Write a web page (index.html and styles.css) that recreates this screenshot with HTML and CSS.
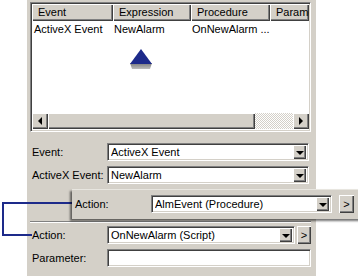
FILE: index.html
```html
<!DOCTYPE html>
<html lang="en">
<head>
    <meta charset="UTF-8">
    <title>Event Handler</title>
    <link rel="stylesheet" href="styles.css">
</head>
<body>
    <div class="panel">
        <div class="list">
            <div class="list-head">
                <div class="col col-event">Event</div>
                <div class="col col-expr">Expression</div>
                <div class="col col-proc">Procedure</div>
                <div class="col col-param">Parame</div>
            </div>
            <div class="list-body">
                <div class="row">
                    <div class="cell col-event first">ActiveX Event</div>
                    <div class="cell col-expr">NewAlarm</div>
                    <div class="cell col-proc">OnNewAlarm ...</div>
                </div>
            </div>
            <div class="hscroll">
                <div class="sbtn"><span class="arrow-left"></span></div>
                <div class="thumb"></div>
                <div class="trough"></div>
                <div class="sbtn"><span class="arrow-right"></span></div>
            </div>
            <!-- pointer marker under the Expression column -->
            <svg class="pointer" width="26" height="22" viewBox="0 0 26 22">
                <defs>
                    <linearGradient id="base" x1="0" y1="0" x2="0" y2="1">
                        <stop offset="0" stop-color="#7a7a7a"/>
                        <stop offset="1" stop-color="#bdbdbd"/>
                    </linearGradient>
                </defs>
                <path d="M2 14 L24 14 L22 20 L4 20 Z" fill="url(#base)"/>
                <path d="M13 0 L24 15 L2 15 Z" fill="#1d2a8a"/>
            </svg>
        </div>

        <div class="form">
            <div class="field">
                <label class="lbl">Event:</label>
                <div class="combo wide"><span class="combo-text">ActiveX Event</span><span class="drop"><span class="arrow-down"></span></span></div>
            </div>
            <div class="field">
                <label class="lbl">ActiveX Event:</label>
                <div class="combo wide"><span class="combo-text">NewAlarm</span><span class="drop"><span class="arrow-down"></span></span></div>
            </div>

            <div class="callout">
                <label class="lbl callout-lbl">Action:</label>
                <div class="combo callout-combo"><span class="combo-text">AlmEvent (Procedure)</span><span class="drop"><span class="arrow-down"></span></span></div>
                <button class="more callout-more">&gt;</button>
            </div>

            <div class="separator"></div>

            <div class="field">
                <label class="lbl">Action:</label>
                <div class="combo narrow"><span class="combo-text">OnNewAlarm (Script)</span><span class="drop"><span class="arrow-down"></span></span></div>
                <button class="more">&gt;</button>
            </div>
            <div class="field">
                <label class="lbl">Parameter:</label>
                <div class="combo wide-text"></div>
            </div>
        </div>
    </div>

    <!-- bracket joining the two Action labels -->
    <svg class="bracket" width="76" height="42" viewBox="0 0 76 42">
        <path d="M74 5 L3 5 L3 37 L32 37" fill="none" stroke="#1d2a8a" stroke-width="2"/>
    </svg>
</body>
</html>
```

FILE: styles.css
```css
html, body {
    margin: 0;
    padding: 0;
    overflow: hidden;
}
body {
    background-color: #fff;
    font-family: "Liberation Sans", Arial, sans-serif;
    font-size: 11px;
    color: #000;
    width: 358px;
    height: 276px;
    position: relative;
}
.panel {
    margin-left: 27px;
    width: 289px;
    box-sizing: border-box;
    background-color: #d4d0c8;
    padding: 2px 5px 5px 3px;
}

/* list view */
.list {
    position: relative;
    height: 130px;
    box-sizing: border-box;
    border: 1px solid;
    border-color: #808080 #fff #fff #808080;
    box-shadow: inset 1px 1px 0 #404040, inset -1px -1px 0 #d4d0c8;
    padding: 1px 1px 2px 1px;
    display: flex;
    flex-direction: column;
    background-color: #fff;
}
.list-head {
    display: flex;
    height: 17px;
    flex: none;
}
.col {
    box-sizing: border-box;
    height: 17px;
    line-height: 17px;
    padding-left: 6px;
    background-color: #d4d0c8;
    box-shadow: inset 1px 1px 0 #fff, inset -1px -1px 0 #404040, inset -2px -2px 0 #808080;
    white-space: nowrap;
    overflow: hidden;
}
.col-event { width: 81px; flex: none; }
.col-expr { width: 78px; flex: none; }
.col-proc { width: 79px; flex: none; }
.col-param { flex: 1; }
.list-body {
    flex: 1;
}
.row {
    display: flex;
    height: 15px;
    line-height: 15px;
    margin-top: 1px;
}
.cell {
    box-sizing: border-box;
    padding-left: 1px;
    white-space: nowrap;
}
.cell.first { padding-left: 2px; }

.hscroll {
    display: flex;
    height: 16px;
    flex: none;
    background-color: #d4d0c8;
}
.sbtn, .thumb, .drop {
    box-sizing: border-box;
    background-color: #d4d0c8;
    box-shadow: inset 1px 1px 0 #fff, inset -1px -1px 0 #404040, inset -2px -2px 0 #808080;
    display: flex;
    align-items: center;
    justify-content: center;
}
.sbtn { width: 16px; flex: none; }
.thumb { width: 207px; flex: none; }
.trough {
    flex: 1;
    background: repeating-conic-gradient(#ffffff 0 25%, #d4d0c8 0 50%) 0 0 / 2px 2px;
}
.arrow-left, .arrow-right, .arrow-down {
    width: 0;
    height: 0;
    border-style: solid;
}
.arrow-left {
    border-width: 4px 4px 4px 0;
    border-color: transparent #000 transparent transparent;
}
.arrow-right {
    border-width: 4px 0 4px 4px;
    border-color: transparent transparent transparent #000;
}
.arrow-down {
    border-width: 4px 4px 0 4px;
    border-color: #000 transparent transparent transparent;
    margin-top: 1px;
}
.pointer {
    position: absolute;
    left: 97px;
    top: 46px;
}

/* form fields */
.form {
    margin-top: 11px;
}
.field {
    display: flex;
    align-items: center;
    height: 18px;
    margin-bottom: 5px;
}
.lbl {
    width: 77px;
    flex: none;
    box-sizing: border-box;
    padding-left: 2px;
    white-space: nowrap;
}
.combo {
    box-sizing: border-box;
    height: 18px;
    background-color: #fff;
    border: 1px solid;
    border-color: #808080 #fff #fff #808080;
    box-shadow: inset 1px 1px 0 #404040, inset -1px -1px 0 #d4d0c8;
    padding: 2px 2px 2px 3px;
    display: flex;
    align-items: center;
}
.combo-text {
    flex: 1;
    white-space: nowrap;
    overflow: hidden;
}
.drop {
    width: 13px;
    height: 14px;
    flex: none;
}
.wide { width: 202px; }
.narrow { width: 188px; }
.wide-text { width: 204px; }
.more {
    box-sizing: border-box;
    width: 14px;
    height: 18px;
    margin-left: 2px;
    padding: 0;
    border: none;
    font-family: inherit;
    font-size: 11px;
    background-color: #d4d0c8;
    box-shadow: inset 1px 1px 0 #fff, inset -1px -1px 0 #404040, inset -2px -2px 0 #808080;
}

/* enlarged callout of the Action row */
.callout {
    position: relative;
    z-index: 1;
    display: flex;
    align-items: center;
    width: 300px;
    margin-left: 42px;
    padding: 5px 0 6px 3px;
    background-color: #d4d0c8;
    border-top: 1px solid #e8e6e0;
    box-shadow: -2px 2px 2px rgba(0, 0, 0, 0.55);
}
.callout-lbl {
    width: 76px;
    padding-left: 0;
}
.callout-combo { width: 181px; }
.callout-more {
    width: 15px;
    margin-left: 7px;
}
.separator {
    height: 0;
    border-top: 1px solid #808080;
    border-bottom: 1px solid #fff;
    margin: 2px 0 3px 0;
}

.bracket {
    position: absolute;
    left: 0;
    top: 198px;
}
```
